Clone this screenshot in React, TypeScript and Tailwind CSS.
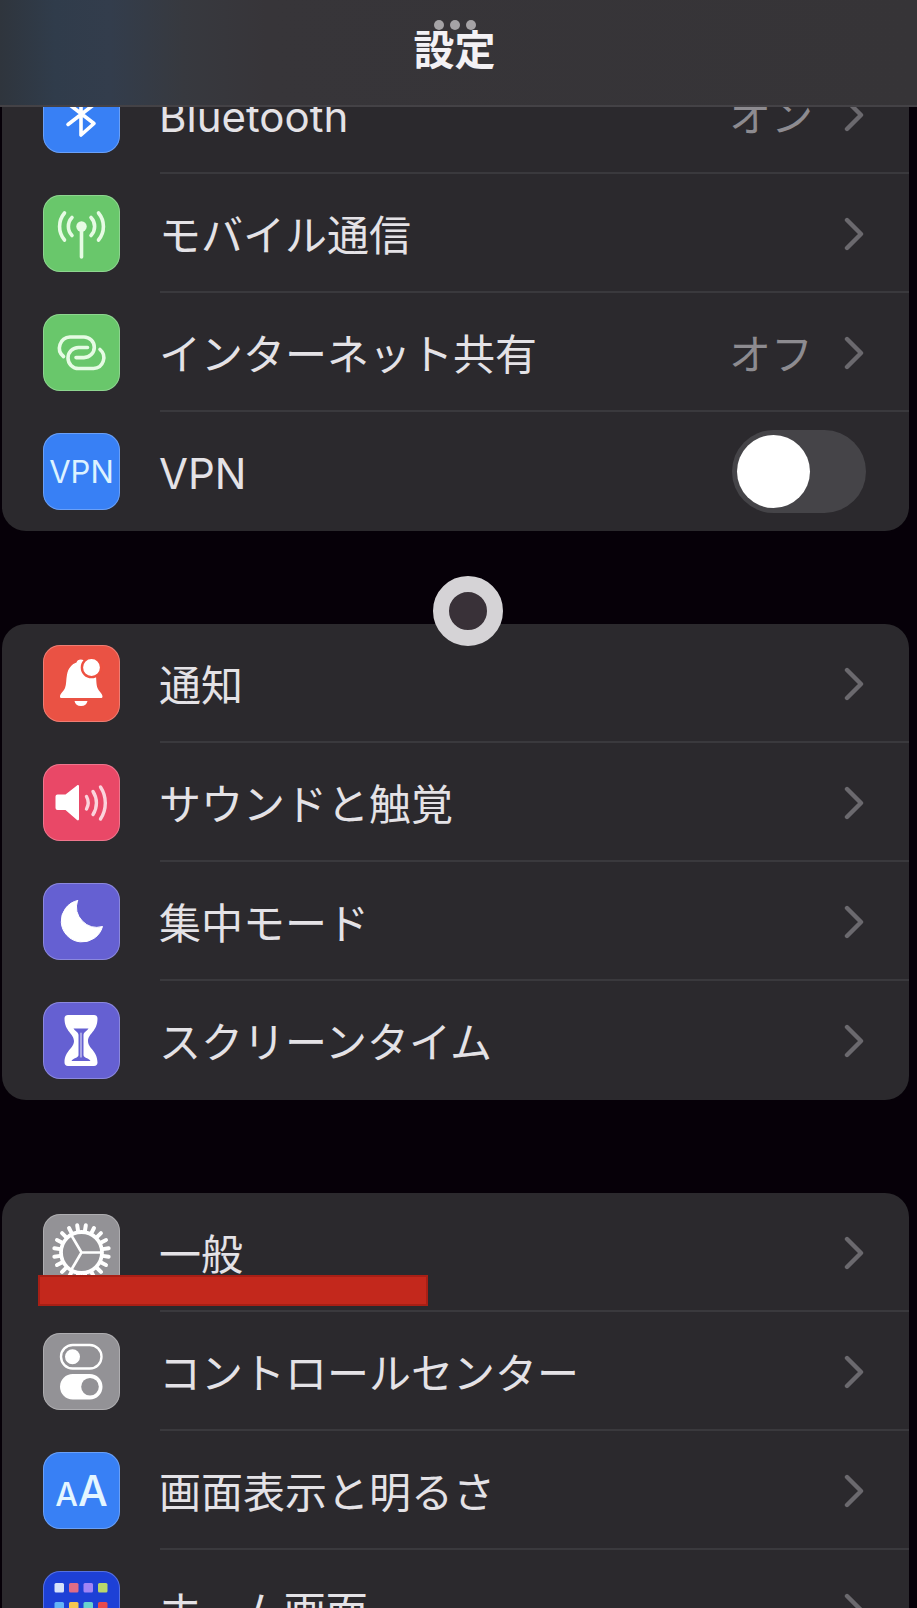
import type { ReactNode } from "react";

type Row = {
  label: string;
  tile: string;
  icon: ReactNode;
  value?: string;
  toggle?: boolean;
  marked?: boolean;
};

const GEAR_TEETH = Array.from({ length: 20 }, (_, i) => i * 18 + 9);

const HOME_DOTS = [
  ["#d6e2fa", "#df6c86", "#a184f6", "#b9d76b"],
  ["#63b4f7", "#f5c750", "#68d3cd", "#e64b4b"],
  ["#f29a4a", "#6fd17a", "#d6e2fa", "#a184f6"],
];

function Glyph({ children }: { children: ReactNode }) {
  return (
    <svg
      viewBox="0 0 77 77"
      className="h-full w-full"
      fill="none"
      stroke="#fff"
      strokeWidth="3.6"
      strokeLinecap="round"
      strokeLinejoin="round"
      aria-hidden="true"
    >
      {children}
    </svg>
  );
}

function BluetoothIcon() {
  return (
    <Glyph>
      <path d="M25 27.5 51 47.5 38 59V17l13 11.5L25 48.5" />
    </Glyph>
  );
}

function AntennaIcon() {
  return (
    <Glyph>
      <g stroke="#e6fbe4">
        <circle cx="38.5" cy="31.5" r="5.2" fill="#e6fbe4" stroke="none" />
        <path d="M38.5 33V62" />
        <path d="M29 22.5a13 13 0 0 0 0 18M48 22.5a13 13 0 0 1 0 18" />
        <path d="M21.500 18a21 21 0 0 0 0 27M55.500 18a21 21 0 0 1 0 27" />
      </g>
    </Glyph>
  );
}

function HotspotIcon() {
  return (
    <Glyph>
      <g stroke="#e6fbe4">
        <path d="M20.500 42.500A11 11 0 0 1 27 23H41a10.300 10.300 0 0 1 0 20.600H33" />
        <path d="M44.500 33.500H35.500a10.500 10.500 0 0 0 0 21H50.500A10.800 10.800 0 0 0 57 35.500" />
      </g>
    </Glyph>
  );
}

function BellIcon() {
  return (
    <Glyph>
      <g fill="#fff" stroke="none">
        <path d="M17 51.500c0-3 3.500-5 5-8.500 1.500-4 1-8 2-13.500 1.300-6.500 5-10.500 9.500-12 .5-2 2-3 4.300-3s3.700 1 4.200 3c7 2.500 10.500 8 11 14 .5 5.500.3 8 1.500 11.500 1.500 3.500 5 5.500 5 8.500 0 1-.7 1.500-1.500 1.500H18.500c-.8 0-1.500-.5-1.500-1.500z" />
        <circle cx="48.5" cy="22.500" r="9.600" stroke="#ee5141" strokeWidth="2.400" />
        <path d="M31.500 56h13a6.600 6 0 0 1-13 0z" />
      </g>
    </Glyph>
  );
}

function SpeakerIcon() {
  return (
    <Glyph>
      <path
        d="M14.500 30.500h8L34 21.500c1-.8 2-.3 2 1v32.500c0 1.300-1 1.800-2 1l-11.500-10h-8a2 2 0 0 1-2-2V32.500a2 2 0 0 1 2-2z"
        fill="#fff"
        stroke="none"
      />
      <g stroke="#fbd3dc" strokeWidth="3.4">
        <path d="M43.500 32.500a13 13 0 0 1 0 12.500" />
        <path d="M50 27.500a21 21 0 0 1 0 23" />
        <path d="M57.500 23a29 29 0 0 1 0 32" />
      </g>
    </Glyph>
  );
}

function MoonIcon() {
  return (
    <Glyph>
      <path
        d="M34.500 17.500A21 21 0 1 0 59.500 43.500 20.500 20.500 0 0 1 34.500 17.500z"
        fill="#fff"
        strokeWidth="1"
      />
    </Glyph>
  );
}

function HourglassIcon() {
  return (
    <Glyph>
      <path
        d="M25 13h26c2.200 0 3.500 1.300 3.500 3.500 0 13-9.500 15-9.500 22.500s9.500 9.500 9.500 21.500c0 2.200-1.300 3.500-3.500 3.500H25c-2.200 0-3.500-1.300-3.500-3.500C21.500 48.500 31 46.500 31 39s-9.500-9.500-9.500-22.500c0-2.200 1.300-3.500 3.500-3.500z"
        fill="#fff"
        stroke="none"
      />
      <path
        d="M30.500 26.500h15c-1 2-5 3.500-5 6.500v20c0 3 5.500 3 7 6H28.500c1.500-3 7-3 7-6v-20c0-3-4-4.500-5-6.500z"
        fill="#6560d2"
        stroke="none"
      />
      <path d="M38 31v24" strokeWidth="1.2" strokeOpacity=".75" />
    </Glyph>
  );
}

function GearIcon() {
  return (
    <Glyph>
      <circle cx="38.5" cy="38.5" r="20.500" strokeWidth="3.8" />
      {GEAR_TEETH.map((deg) => (
        <path key={deg} d="M60 38.5h6" strokeWidth="4" transform={`rotate(${deg} 38.5 38.5)`} />
      ))}
      <path d="M38.500 38.500H58M38.500 38.500 28.500 21.500M38.500 38.500 28.500 55.500" strokeWidth="2.6" />
    </Glyph>
  );
}

function ControlsIcon() {
  return (
    <Glyph>
      <rect x="18" y="12" width="40.5" height="23.5" rx="11.7" strokeWidth="2.4" />
      <circle cx="29.5" cy="23.7" r="7.5" fill="#fff" stroke="none" />
      <rect x="17" y="41" width="42.5" height="25.5" rx="12.7" fill="#fff" stroke="none" />
      <circle cx="47" cy="53.8" r="8.8" fill="#939296" stroke="none" />
    </Glyph>
  );
}

function HomeIcon() {
  return (
    <Glyph>
      {HOME_DOTS.map((dots, y) =>
        dots.map((fill, x) => (
          <rect
            key={`${x}-${y}`}
            x={11.5 + x * 14.5}
            y={12 + y * 19}
            width="9.5"
            height="9.5"
            rx="1.5"
            fill={fill}
            stroke="none"
          />
        ))
      )}
    </Glyph>
  );
}

const groups: Row[][] = [
  [
    { label: "Bluetooth", tile: "bg-[#3880f5]", icon: <BluetoothIcon />, value: "オン" },
    { label: "モバイル通信", tile: "bg-[#69c76b]", icon: <AntennaIcon /> },
    { label: "インターネット共有", tile: "bg-[#69c76b]", icon: <HotspotIcon />, value: "オフ" },
    {
      label: "VPN",
      tile: "bg-[#3880f5]",
      icon: <span className="text-[31px] text-[#dcf2ff]">VPN</span>,
      toggle: true,
    },
  ],
  [
    { label: "通知", tile: "bg-[#ea5244]", icon: <BellIcon /> },
    { label: "サウンドと触覚", tile: "bg-[#e94867]", icon: <SpeakerIcon /> },
    { label: "集中モード", tile: "bg-[#6560d2]", icon: <MoonIcon /> },
    { label: "スクリーンタイム", tile: "bg-[#6560d2]", icon: <HourglassIcon /> },
  ],
  [
    { label: "一般", tile: "bg-[#939296]", icon: <GearIcon />, marked: true },
    { label: "コントロールセンター", tile: "bg-[#939296]", icon: <ControlsIcon /> },
    {
      label: "画面表示と明るさ",
      tile: "bg-[#3880f5]",
      icon: (
        <span className="flex items-baseline font-medium text-[#e4f6ff]">
          <span className="text-[32px]">A</span>
          <span className="text-[42px]">A</span>
        </span>
      ),
    },
    { label: "ホーム画面", tile: "bg-[#1d40d6]", icon: <HomeIcon /> },
  ],
];

function Chevron() {
  return (
    <svg viewBox="0 0 20 34" className="h-[34px] w-5 shrink-0" fill="none" aria-hidden="true">
      <path
        d="M3 3 17 17 3 31"
        stroke="#6b696e"
        strokeWidth="4.4"
        strokeLinecap="round"
        strokeLinejoin="round"
      />
    </svg>
  );
}

function RowBody({ row }: { row: Row }) {
  return (
    <>
      <span
        className={`flex size-[77px] shrink-0 items-center justify-center overflow-hidden rounded-[17px] leading-none ring-1 ring-white/25 ring-inset ${row.tile}`}
      >
        {row.icon}
      </span>
      <span className="flex-1 pt-1 text-left text-[42px] leading-[60px] text-[#e4e2e6]">{row.label}</span>
    </>
  );
}

function SettingsRow({ row }: { row: Row }) {
  const base = "flex h-[119px] w-full items-center gap-[39px] pr-[43px] pl-[41px]";
  return (
    <li className="group relative">
      {row.toggle ? (
        <label className={base}>
          <RowBody row={row} />
          <input
            type="checkbox"
            role="switch"
            className="h-[83px] w-[134px] shrink-0 appearance-none rounded-full bg-[#454448] p-[5px] before:block before:size-[73px] before:rounded-full before:bg-white checked:bg-[#69c76b] checked:before:ml-auto"
          />
        </label>
      ) : (
        <button type="button" className={base}>
          <RowBody row={row} />
          <span className="flex items-center gap-[31px] pr-0.5">
            {row.value && (
              <span className="pt-1 text-[42px] leading-[60px] text-[#8d8b90]">{row.value}</span>
            )}
            <Chevron />
          </span>
        </button>
      )}
      <span className="absolute right-0 bottom-0 left-[158px] h-0.5 bg-[#3a393d] group-last:hidden" />
      {row.marked && (
        <span className="absolute bottom-1.5 left-9 h-[31px] w-[390px] border-2 border-[#a81f15] bg-[#c3281c]" />
      )}
    </li>
  );
}

export default function App() {
  return (
    <div
      lang="ja"
      className="relative h-screen overflow-hidden bg-[#060008] font-['Inter','Noto_Sans_CJK_JP',sans-serif] font-normal"
    >
      <header className="absolute inset-x-0 top-0 z-10 flex h-[107px] justify-center border-b-2 border-[#444246] bg-[linear-gradient(to_right,#2f353d,#303c4b_6%,#333d4c_12%,#37393f_20%,#373539_29%,#363437)] pt-5 pr-2">
        <h1 className="text-[41px] leading-[60px] font-bold text-[#f3f1f4]">設定</h1>
        <span className="absolute inset-x-0 top-5 flex justify-center gap-1.5 pr-2">
          <span className="size-2.5 rounded-full bg-[#a5a3a6]" />
          <span className="size-2.5 rounded-full bg-[#a5a3a6]" />
          <span className="size-2.5 rounded-full bg-[#a5a3a6]" />
        </span>
      </header>

      <main className="flex flex-col gap-[93px] pt-[55px] pr-2 pl-0.5">
        {groups.map((rows) => (
          <ul key={rows[0].label} className="overflow-hidden rounded-[24px] bg-[#2b292d]">
            {rows.map((row) => (
              <SettingsRow key={row.label} row={row} />
            ))}
          </ul>
        ))}
      </main>

      <button
        type="button"
        aria-label="AssistiveTouch"
        className="absolute top-[576px] left-[51%] size-[70px] -translate-x-1/2 rounded-full border-16 border-[#d5d3d6] bg-[#393138]"
      />
    </div>
  );
}
